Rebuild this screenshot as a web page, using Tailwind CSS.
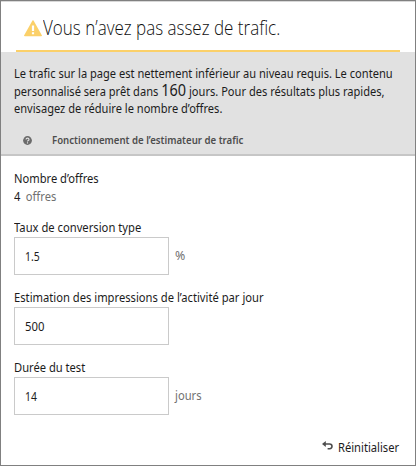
<!DOCTYPE html>
<html lang="fr">
<head>
<meta charset="utf-8">
<title>Estimateur de trafic</title>
<script src="https://cdn.jsdelivr.net/npm/@tailwindcss/browser@4"></script>
</head>
<body class="bg-white">
<main class="flex h-[466px] w-[416px] flex-col border border-[#808080] bg-white font-['Noto_Sans',sans-serif] text-[13px] leading-[18px] text-[#1c1c1c]">
  <div class="h-px shrink-0 bg-[#d8d8d8]"></div>
  <header class="mx-[15px] flex h-[50px] shrink-0 items-start border-b-2 border-[#fbd069] pt-[12px] pl-[8px]">
    <svg class="mt-[6px] h-[17px] w-[19px] shrink-0" viewBox="0 0 19 17"><path d="M8.3.8Q9-.2 9.7.8L17.8 15.2Q18.3 16.2 17.2 16.2H.8Q-.3 16.2.2 15.2Z" fill="#fbd069"/><path d="M7.9 5.6h2.2v5.4H7.9zM7.9 12.2h2.2v2.1H7.9z" fill="#fff"/></svg>
    <h1 class="origin-left scale-x-[0.85] whitespace-nowrap font-['Open_Sans','Noto_Sans',sans-serif] text-[20px] leading-[28px] font-light text-[#111]">Vous n’avez pas assez de trafic.</h1>
  </header>
  <section class="h-[104px] shrink-0 border-b-2 border-[#c6c6c6] bg-[#e1e1e1] pt-[12px] pl-[13px]">
    <div class="origin-left scale-x-[0.853] whitespace-nowrap">
      <p class="h-[17px]">Le trafic sur la page est nettement inférieur au niveau requis. Le contenu</p>
      <p class="flex h-[18px] items-baseline leading-[17px] whitespace-pre"><span>personnalisé sera prêt dans </span><span class="text-[17px] leading-[17px]">160</span><span> jours. Pour des résultats plus rapides,</span></p>
      <p class="h-[18px] leading-[18px]">envisagez de réduire le nombre d’offres.</p>
    </div>
    <div class="mt-[14px] flex h-[18px] items-center pl-[9px]">
      <svg class="h-[9px] w-[9px] shrink-0" viewBox="0 0 9 9"><circle cx="4.5" cy="4.5" r="4.4" fill="#6b6b6b"/><path d="M3 3.5Q3.1 2.1 4.5 2.1T6 3.4Q6 4.1 5.2 4.5T4.5 5.5M4.5 6.3v1.1" fill="none" stroke="#e1e1e1" stroke-width="1.1"/></svg>
      <span class="ml-[20px] origin-left scale-x-[0.875] whitespace-nowrap text-[11px] font-semibold text-[#4d4d4d]">Fonctionnement de l’estimateur de trafic</span>
    </div>
  </section>
  <section class="flex flex-col pt-[13px] pl-[13px]">
    <div class="h-[49px]">
      <p class="origin-left scale-x-[0.858]">Nombre d’offres</p>
      <p class="origin-left scale-x-[0.858]">4 <span class="ml-[3px] text-[#707070]">offres</span></p>
    </div>
    <div class="h-[70px]">
      <label for="rate" class="block h-[19px] origin-left scale-x-[0.863]">Taux de conversion type</label>
      <div class="flex items-center">
        <div class="h-[38px] w-[155px] border border-[#cacaca] pl-[10px]"><input id="rate" value="1.5" class="block h-[35px] w-[140px] origin-left scale-x-[0.8] outline-none"></div>
        <span class="mb-[2px] ml-[6px] origin-left scale-x-[0.95] text-[#707070]">%</span>
      </div>
    </div>
    <div class="h-[70px]">
      <label for="views" class="block h-[19px] origin-left scale-x-[0.861]">Estimation des impressions de l’activité par jour</label>
      <div class="h-[38px] w-[155px] border border-[#cacaca] pl-[10px]"><input id="views" value="500" class="block h-[35px] w-[140px] origin-left scale-x-[0.87] outline-none"></div>
    </div>
    <div class="h-[70px]">
      <label for="days" class="block h-[19px] origin-left scale-x-[0.858]">Durée du test</label>
      <div class="flex items-center">
        <div class="h-[38px] w-[155px] border border-[#cacaca] pl-[10px]"><input id="days" value="14" class="block h-[35px] w-[140px] origin-left scale-x-[0.8] outline-none"></div>
        <span class="mb-[2px] ml-[6px] origin-left scale-x-[0.86] text-[#707070]">jours</span>
      </div>
    </div>
  </section>
  <footer class="mt-auto mb-[9px] flex items-center justify-end pr-[16px]">
    <svg class="mr-[5px] mb-[3px] h-[9px] w-[11px]" viewBox="0 0 11 9"><path d="M0 3L3.8 0v6z" fill="#4d4d4d"/><path d="M3 3h4.6Q10 3 10 5.3T7.6 7.7H5.6" fill="none" stroke="#4d4d4d" stroke-width="1.6"/></svg>
    <div class="w-[61px]"><button class="origin-left scale-x-[0.858] whitespace-nowrap">Réinitialiser</button></div>
  </footer>
</main>
</body>
</html>
